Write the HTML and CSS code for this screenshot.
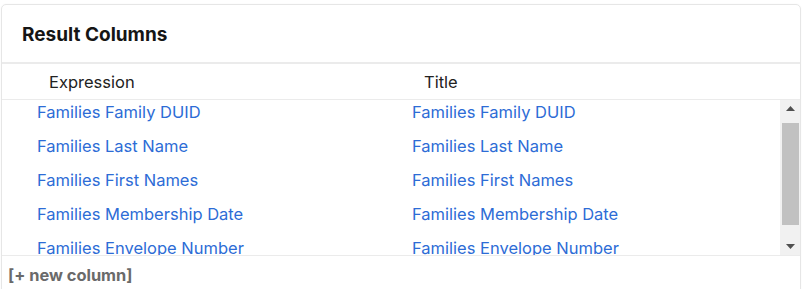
FILE: index.html
```html
<!DOCTYPE html>
<html>
<head>
<meta charset="utf-8">
<link rel="stylesheet" href="styles.css">
</head>
<body>
<div class="card">
  <div class="card-header">Result Columns</div>
  <div class="thead">
    <div class="th col1">Expression</div>
    <div class="th col2">Title</div>
  </div>
  <div class="tbody-wrap">
    <div class="tbody">
      <div class="rows">
        <div class="row"><span class="cell col1">Families Family DUID</span><span class="cell col2">Families Family DUID</span></div>
        <div class="row"><span class="cell col1">Families Last Name</span><span class="cell col2">Families Last Name</span></div>
        <div class="row"><span class="cell col1">Families First Names</span><span class="cell col2">Families First Names</span></div>
        <div class="row"><span class="cell col1">Families Membership Date</span><span class="cell col2">Families Membership Date</span></div>
        <div class="row"><span class="cell col1">Families Envelope Number</span><span class="cell col2">Families Envelope Number</span></div>
      </div>
    </div>
    <div class="scrollbar">
      <div class="sb-btn"><svg width="9" height="5" viewBox="0 0 9 5"><path d="M4.5 0L9 5H0z" fill="#505050"/></svg></div>
      <div class="sb-track"><div class="sb-gap"></div><div class="sb-thumb"></div></div>
      <div class="sb-btn"><svg width="9" height="5" viewBox="0 0 9 5"><path d="M0 0H9L4.5 5z" fill="#505050"/></svg></div>
    </div>
  </div>
  <div class="footer">[+ new column]</div>
</div>
</body>
</html>
```
FILE: styles.css
```css
html, body {
  margin: 0;
  padding: 0;
  background: #fff;
}
body {
  font-family: Inter, "Open Sans", "Liberation Sans", sans-serif;
  overflow: hidden;
}
.card {
  margin: 4px 0 0 1px;
  width: 800px;
  border: 1px solid #e6e6e6;
  border-radius: 5px 5px 0 0;
  height: 300px;
  box-sizing: border-box;
  box-shadow: 0 0 2px rgba(0,0,0,0.04);
}
.card-header {
  height: 59px;
  box-sizing: border-box;
  padding: 18px 0 0 20px;
  font-size: 19px;
  font-weight: 700;
  color: #151515;
  border-bottom: 2px solid #ebebeb;
}
.thead {
  display: flex;
  height: 36px;
  align-items: center;
  border-bottom: 1px solid #ebebeb;
  box-sizing: border-box;
  font-size: 16.5px;
  color: #222;
}
.th.col1 { width: 375px; padding-left: 47px; box-sizing: border-box; }
.th.col2 { padding-left: 47px; }
.tbody-wrap {
  display: flex;
  height: 156px;
  border-bottom: 1px solid #ebebeb;
  box-sizing: border-box;
}
.tbody {
  flex: 1;
  overflow: hidden;
}
.rows {
  margin-top: -5px;
}
.row {
  display: flex;
  height: 34px;
  align-items: center;
  font-size: 16.5px;
  color: #2d6cd6;
}
.cell.col1 { width: 375px; padding-left: 35px; box-sizing: border-box; }
.cell.col2 { padding-left: 35px; }
.scrollbar {
  width: 20px;
  background: #f1f1f1;
  display: flex;
  flex-direction: column;
}
.sb-btn {
  height: 17px;
  display: flex;
  align-items: center;
  justify-content: center;
}
.sb-track {
  flex: 1;
  display: flex;
  flex-direction: column;
  align-items: center;
}
.sb-gap { height: 6px; }
.sb-thumb {
  width: 17px;
  height: 102px;
  background: #c1c1c1;
}
.footer {
  padding: 9px 0 0 6px;
  font-size: 16.4px;
  font-weight: 700;
  color: #6a6a6a;
}
```
